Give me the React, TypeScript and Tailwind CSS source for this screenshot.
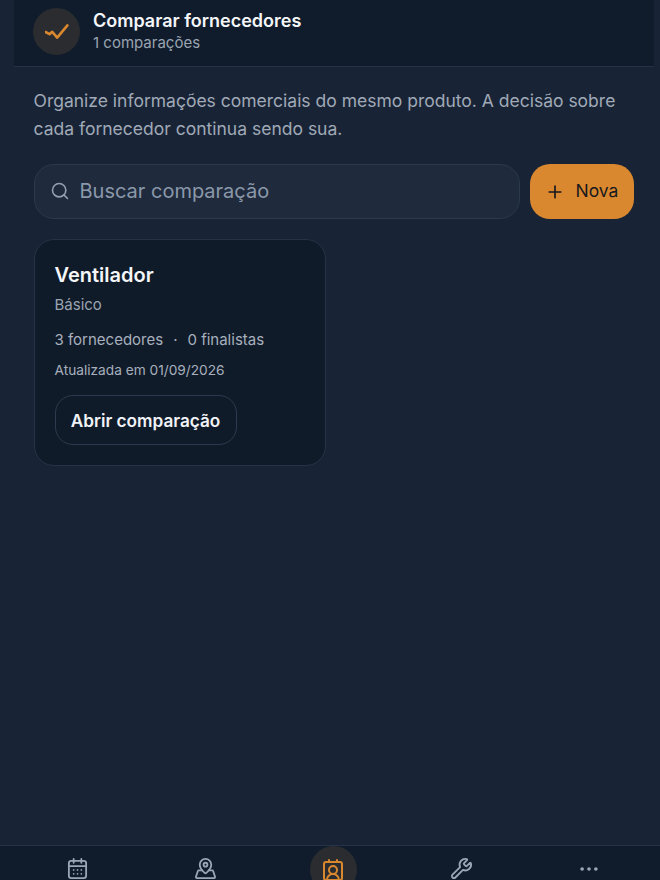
import { Search, Plus, Wrench, MapPinned, ContactRound } from "lucide-react";

function CalendarDots() {
  return (
    <svg viewBox="0 0 24 24" className="h-[23px] w-[23px]" fill="none" stroke="currentColor" strokeWidth={1.9} strokeLinecap="round" strokeLinejoin="round">
      <rect x="3" y="4" width="18" height="18" rx="2.5" />
      <path d="M8 2v4M16 2v4M3 9.5h18" />
      <g stroke="none" fill="currentColor">
        <circle cx="8" cy="13.5" r="0.9" />
        <circle cx="12" cy="13.5" r="0.9" />
        <circle cx="16" cy="13.5" r="0.9" />
        <circle cx="8" cy="17.5" r="0.9" />
        <circle cx="12" cy="17.5" r="0.9" />
        <circle cx="16" cy="17.5" r="0.9" />
      </g>
    </svg>
  );
}

function ScribbleCheck() {
  return (
    <svg viewBox="0 0 24 24" className="h-6 w-6 text-[#da882f]" fill="none" stroke="currentColor" strokeWidth={2.6} strokeLinecap="round" strokeLinejoin="round">
      <path d="M0.5 12 L4.5 14.2 L7.2 11.8 L12.2 17.6 L22.4 5.4" />
    </svg>
  );
}

function Dots() {
  return (
    <svg viewBox="0 0 24 24" className="h-[22px] w-[22px]" fill="currentColor">
      <circle cx="4.5" cy="12" r="2" />
      <circle cx="12" cy="12" r="2" />
      <circle cx="19.5" cy="12" r="2" />
    </svg>
  );
}

export default function App() {
  return (
    <div className="relative h-[880px] w-[660px] overflow-hidden bg-[#182436] font-['Inter',sans-serif]">
      <div className="flex h-full flex-col">
        <header className="ml-[14px] mr-[6px] flex h-[67px] shrink-0 items-start gap-[13px] border-b border-[#263346] bg-[#101c2c] pl-[19px] pt-[8px]">
          <div className="flex h-[47px] w-[47px] items-center justify-center rounded-full bg-[#2a2c30]">
            <ScribbleCheck />
          </div>
          <div className="pt-[1px]">
            <div className="text-[18px] font-semibold leading-[24px] text-[#f4f6f9]">Comparar fornecedores</div>
            <div className="text-[15px] leading-[20px] text-[#9aa4b1]">1 comparações</div>
          </div>
        </header>
        <main className="flex-1 pl-[34px] pr-[26px] pt-[20px]">
          <p className="-ml-[0.5px] w-[590px] text-[17.5px] leading-[28px] text-[#a0a9b6]">
            Organize informações comerciais do mesmo produto. A decisão sobre cada fornecedor continua sendo sua.
          </p>
          <div className="mt-[21px] flex gap-[10px]">
            <div className="flex h-[55px] w-[486px] items-center gap-[10px] rounded-[20px] border border-[#2b394d] bg-[#1f2b3d] pb-[1px] pl-[15px]">
              <Search className="h-[20px] w-[20px] text-[#94a1b2]" strokeWidth={1.9} />
              <span className="-ml-[0.5px] text-[20px] text-[#8b98aa]">Buscar comparação</span>
            </div>
            <button className="flex h-[55px] w-[104px] items-center justify-center gap-[11px] rounded-[20px] bg-[#da882f] pr-[1px] text-[17.5px] font-normal text-[#17191d]">
              <Plus className="h-[20px] w-[20px]" strokeWidth={2} />
              Nova
            </button>
          </div>
          <article className="mt-[20px] h-[227px] w-[292px] rounded-[20px] border border-[#263346] bg-[#101b2a] pl-[20px] pt-[20px]">
            <h2 className="-ml-[0.5px] text-[20px] font-semibold leading-[30px] text-[#f4f6f9]">Ventilador</h2>
            <div className="-ml-[0.5px] mt-[5px] text-[15px] leading-[20px] text-[#9aa4b1]">Básico</div>
            <div className="-ml-[0.5px] mt-[15px] flex items-center gap-[10px] text-[15px] leading-[20px] text-[#a7b0bc]">
              <span>3 fornecedores</span><span>·</span><span>0 finalistas</span>
            </div>
            <div className="-ml-[0.5px] mt-[10px] text-[13.7px] leading-[20px] text-[#a7b0bc]">Atualizada em 01/09/2026</div>
            <button className="mt-[15px] flex h-[50px] w-[182px] items-center justify-center rounded-[18px] border border-[#2e3b4e] pt-[2px] pr-[1px] text-[17.2px] font-semibold text-[#f0f3f7]">
              Abrir comparação
            </button>
          </article>
        </main>
        <nav className="h-[35px] shrink-0 overflow-hidden border-t border-[#263346] bg-[#101c2c] text-[#9aa6b6]">
          <div className="ml-[13px] grid w-[640px] grid-cols-5">
            <div className="flex justify-center pt-[11px]"><CalendarDots /></div>
            <div className="flex justify-center pt-[11px]"><MapPinned className="h-[23px] w-[23px]" strokeWidth={1.9} /></div>
            <div className="flex justify-center">
              <div className="flex h-[47px] w-[47px] justify-center rounded-full bg-[#2a2c30] pt-[12px] text-[#da882f]">
                <ContactRound className="h-[24px] w-[24px]" strokeWidth={2} />
              </div>
            </div>
            <div className="flex justify-center pt-[11px]"><Wrench className="h-[23px] w-[23px]" strokeWidth={1.9} /></div>
            <div className="flex justify-center pt-[12px]"><Dots /></div>
          </div>
        </nav>
      </div>
    </div>
  );
}
